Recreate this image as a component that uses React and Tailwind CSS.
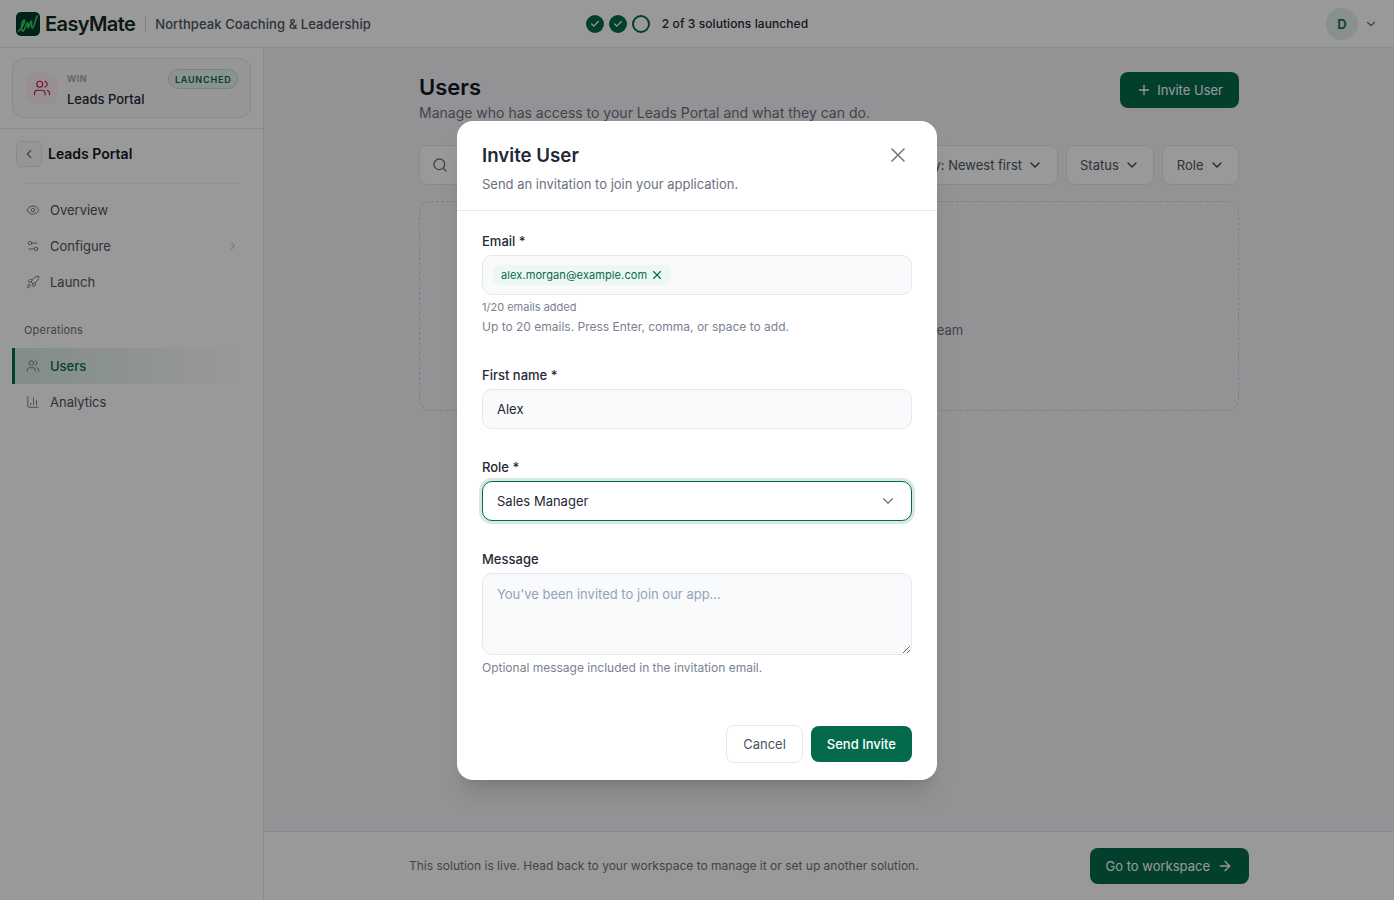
import React from "react";
import {
  ArrowRight,
  ChartColumn,
  Check,
  ChevronDown,
  ChevronLeft,
  ChevronRight,
  Eye,
  Plus,
  Rocket,
  Search,
  Settings2,
  Users,
  X,
} from "lucide-react";

function Logo() {
  return (
    <svg width="24" height="24" viewBox="0 0 24 24" className="shrink-0">
      <rect width="24" height="24" rx="5" fill="#06382a" />
      <path
        d="M2.500 19c2-1 5-6 6-9 .7-2-.8-3-1.800-.5S5 16 6 18.500s3-2 4.500-6c.7-2 1.300-2.500 1.300-.5s-.3 4 .3 4 1.500-4 2.500-6 1.200-.5 1 1-.2 5 .7 5 2-3 3-6.500.8-3.500 2-5.500"
        fill="none"
        stroke="#2fd15f"
        strokeWidth="1.600"
        strokeLinecap="round"
        strokeLinejoin="round"
      />
    </svg>
  );
}

function Header() {
  return (
    <header className="flex h-12 shrink-0 items-center border-b border-[#e5e7eb] bg-white px-4">
      <div className="flex flex-1 items-center">
        <Logo />
        <span className="ml-[5px] text-[20px] font-semibold leading-6 tracking-[-0.6px] text-[#0f2a20]">EasyMate</span>
        <span className="ml-[10px] h-4 w-px bg-[#d1d5db]" />
        <span className="ml-[9px] pt-[2px] text-[13px] font-medium tracking-[0.08px] text-[#4b5563]">Northpeak Coaching &amp; Leadership</span>
      </div>
      <div className="flex items-center">
        <div className="flex items-center gap-[5px]">
          <span className="flex h-[18px] w-[18px] items-center justify-center rounded-full bg-[#046a4c] text-white">
            <Check size={10} strokeWidth={3} />
          </span>
          <span className="flex h-[18px] w-[18px] items-center justify-center rounded-full bg-[#046a4c] text-white">
            <Check size={10} strokeWidth={3} />
          </span>
          <span className="h-[18px] w-[18px] rounded-full border-2 border-[#046a4c]" />
        </div>
        <span className="ml-3 text-xs font-medium tracking-[0.08px] text-[#1f2937]">2 of 3 solutions launched</span>
      </div>
      <div className="flex flex-1 items-center justify-end">
        <span className="flex h-8 w-8 items-center justify-center rounded-full bg-[#e3efea] pt-[2px] text-[13px] font-semibold text-[#046a4c]">
          D
        </span>
        <ChevronDown size={14} className="ml-[6px] text-[#6b7280]" />
      </div>
    </header>
  );
}

function NavItem({ icon: Icon, label, chevron }) {
  return (
    <div className="flex h-9 items-center pl-[14px] pr-[12px] text-[13px] text-[#4b5563]">
      <Icon size={14} strokeWidth={1.500} className="text-[#6b7280]" />
      <span className="ml-[10px] flex-1 pt-px">{label}</span>
      {chevron && <ChevronRight size={12} className="text-[#9ca3af]" />}
    </div>
  );
}

function Sidebar() {
  return (
    <aside className="flex w-[264px] shrink-0 flex-col border-r border-[#e5e7eb] bg-white">
      <div className="border-b border-[#e5e7eb] px-3 pb-[10px] pt-[10px]">
        <div className="flex h-[60px] items-center rounded-xl border border-[#e5e7eb] bg-[#fafafa] pl-[13px] pr-3">
          <span className="flex h-[31px] w-[31px] shrink-0 items-center justify-center rounded-lg bg-[#fdeef4] text-[#be185d]">
            <Users size={18} strokeWidth={1.500} />
          </span>
          <div className="ml-[10px] flex-1 pt-[2px]">
            <div className="flex items-center justify-between">
              <span className="text-[9px] font-semibold tracking-[0.6px] text-[#9ca3af]">WIN</span>
              <span className="rounded-full border border-[#c3e0d2] bg-[#e8f5ee] px-[5.500px] py-[2.500px] text-[9px] font-semibold leading-[13px] tracking-[0.8px] text-[#046a4c]">
                LAUNCHED
              </span>
            </div>
            <div className="text-[13px] font-medium leading-5 text-[#1f2937]">Leads Portal</div>
          </div>
        </div>
      </div>
      <div className="px-3 pt-3">
        <div className="flex items-center pl-1">
          <span className="flex h-[26px] w-[26px] items-center justify-center rounded-md border border-[#e5e7eb] bg-[#fafafa] text-[#6b7280]">
            <ChevronLeft size={14} />
          </span>
          <span className="ml-[6px] text-sm font-semibold text-[#111827]">Leads Portal</span>
        </div>
        <div className="mx-3 mt-4 h-px bg-[#f3f4f6]" />
        <nav className="mt-[8px]">
          <NavItem icon={Eye} label="Overview" />
          <NavItem icon={Settings2} label="Configure" chevron />
          <NavItem icon={Rocket} label="Launch" />
        </nav>
        <div className="mt-[22px] h-[16px] pl-3 text-[11px] leading-4 tracking-[0.2px] text-[#6b7280]">Operations</div>
        <div className="mr-[12px] mt-[10px] flex h-9 items-center border-l-[3px] border-[#046a4c] bg-gradient-to-r from-[#d8ebe3] to-transparent pl-[11px] text-[13px] font-medium text-[#046a4c]">
          <Users size={14} strokeWidth={1.500} className="text-[#6b7280]" />
          <span className="ml-[10px] pt-px">Users</span>
        </div>
        <NavItem icon={ChartColumn} label="Analytics" />
      </div>
    </aside>
  );
}

function FilterButton({ label }) {
  return (
    <span className="flex h-10 items-center gap-[5px] whitespace-nowrap rounded-lg border border-[#e5e7eb] bg-white px-[13.500px] text-[13px] text-[#4b5563]">
      <span className="pt-px">{label}</span>
      <ChevronDown size={16} className="text-[#374151]" />
    </span>
  );
}

function Content() {
  return (
    <div className="flex min-w-0 flex-1 flex-col bg-[#f5f6f8]">
      <main className="flex-1 px-[155px] pt-6">
        <div className="flex items-start justify-between">
          <div>
            <h1 className="text-[22px] font-semibold leading-[30px] text-[#111827]">Users</h1>
            <p className="mt-[1px] text-sm leading-5 text-[#6b7280]">
              Manage who has access to your Leads Portal and what they can do.
            </p>
          </div>
          <span className="flex h-9 items-center gap-[5px] rounded-lg bg-[#046a4c] px-4 text-[13px] text-white">
            <Plus size={16} />
            <span className="pt-px">Invite User</span>
          </span>
        </div>
        <div className="mt-[22px] flex items-center gap-2">
          <div className="flex h-10 flex-1 items-center rounded-lg border border-[#e5e7eb] bg-white pl-3 text-[#6b7280]">
            <Search size={16} />
          </div>
          <FilterButton label="Sort by: Newest first" />
          <FilterButton label="Status" />
          <FilterButton label="Role" />
        </div>
        <div className="mt-4 flex h-[210px] flex-col items-center justify-center rounded-xl border border-dashed border-[#d1d5db]">
          <Users size={20} className="text-[#9ca3af]" />
          <p className="text-base font-semibold leading-6 text-[#111827]">No users yet</p>
          <p className="mt-1 text-[13px] leading-5 text-[#6b7280]">Invite users to collaborate across your team</p>
        </div>
      </main>
      <footer className="h-[69px] shrink-0 border-t border-[#e5e7eb] bg-white">
        <div className="mx-auto flex h-full w-[840px] items-center justify-between">
          <p className="text-xs text-[#6b7280]">
            This solution is live. Head back to your workspace to manage it or set up another solution.
          </p>
          <span className="flex h-9 items-center gap-[7px] rounded-lg bg-[#046a4c] px-4 text-[13px] text-white">
            <span className="pt-px">Go to workspace</span>
            <ArrowRight size={16} />
          </span>
        </div>
      </footer>
    </div>
  );
}

function Field({ label, children }) {
  return (
    <div>
      <label className="block text-[13px] font-medium leading-5 text-[#1f2937]">{label}</label>
      <div className="mt-1">{children}</div>
    </div>
  );
}

function InviteModal() {
  return (
    <div className="absolute inset-0 flex items-center justify-center bg-black/40">
      <div className="w-[480px] overflow-hidden rounded-2xl bg-white shadow-xl">
        <div className="flex items-start justify-between border-b border-[#e5e7eb] px-[25px] pb-4 pt-5">
          <div>
            <h2 className="pt-px text-[18.700px] font-semibold leading-7 text-[#1f2937]">Invite User</h2>
            <p className="mt-1 text-[13px] leading-5 text-[#6b7280]">Send an invitation to join your application.</p>
          </div>
          <X size={24} strokeWidth={1.500} className="mr-[2px] mt-[2px] text-[#6b7280]" />
        </div>
        <div className="px-[25px] pt-5">
          <Field label="Email *">
            <div className="flex h-10 items-center rounded-[10px] border border-[#e5e7eb] bg-[#f8fafc] px-[10px]">
              <span className="flex h-5 items-center gap-[3px] rounded-md bg-[#edf8f2] pl-2 pr-[7px] text-[11px] tracking-[0.1px] text-[#046a4c]">
                <span className="pt-px">alex.morgan@example.com</span>
                <X size={14} strokeWidth={2} />
              </span>
            </div>
          </Field>
          <p className="mt-1 text-[11px] leading-4 text-[#7a8291]">1/20 emails added</p>
          <p className="mt-1 text-xs leading-4 text-[#7a8291]">Up to 20 emails. Press Enter, comma, or space to add.</p>

          <div className="mt-[30px]">
            <Field label="First name *">
              <input
                readOnly
                value="Alex"
                className="block h-10 w-full rounded-[10px] border border-[#e5e7eb] bg-[#f8fafc] px-[14px] text-[13px] text-[#1f2937] outline-none"
              />
            </Field>
          </div>

          <div className="mt-7">
            <Field label="Role *">
              <div className="flex h-10 items-center justify-between rounded-[10px] border border-[#046a4c] bg-white px-[14px] text-[13px] text-[#1f2937] ring-[3px] ring-[#d5ebe2]">
                <span className="pt-[2px]">Sales Manager</span>
                <ChevronDown size={18} strokeWidth={1.500} className="text-[#6b7280]" />
              </div>
            </Field>
          </div>

          <div className="mt-7">
            <Field label="Message">
              <textarea
                readOnly
                placeholder="You've been invited to join our app..."
                className="block h-[82px] w-full rounded-[10px] border border-[#e5e7eb] bg-[#f8fafc] px-[14px] py-[10px] text-[13px] leading-5 text-[#1f2937] outline-none placeholder:text-[#94a3b8]"
              />
            </Field>
          </div>
          <p className="mt-[5px] text-xs leading-4 text-[#7a8291]">Optional message included in the invitation email.</p>
        </div>
        <div className="flex items-center justify-end gap-2 px-[25px] pb-[17px] pt-[49px]">
          <span className="flex h-[38px] items-center rounded-lg border border-[#e5e7eb] bg-white px-4 pt-[2px] text-[13px] text-[#4b5563]">
            Cancel
          </span>
          <span className="flex h-9 items-center rounded-lg bg-[#046a4c] px-4 pt-[2px] text-[13px] font-medium text-white">
            Send Invite
          </span>
        </div>
      </div>
    </div>
  );
}

export default function App() {
  return (
    <div className="flex h-screen overflow-hidden bg-white font-['Inter',sans-serif]">
      <div className="relative flex min-w-0 flex-1 flex-col">
        <Header />
        <div className="flex min-h-0 flex-1">
          <Sidebar />
          <Content />
        </div>
        <InviteModal />
      </div>
      <div className="w-[6px] shrink-0 bg-white" />
    </div>
  );
}
